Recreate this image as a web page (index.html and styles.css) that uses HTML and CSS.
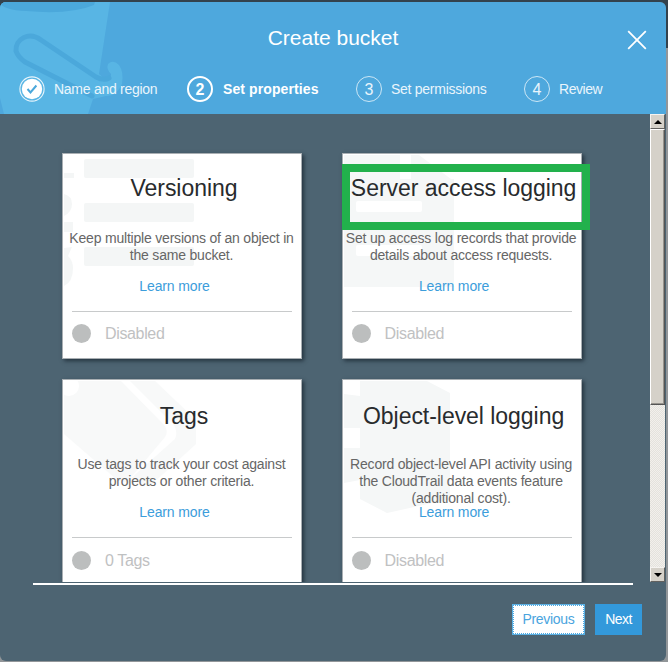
FILE: index.html
```html
<!DOCTYPE html>
<html lang="en">
<head>
<meta charset="utf-8">
<title>Create bucket</title>
<link rel="stylesheet" href="styles.css">
</head>
<body>
<main class="modal">
  <header class="header">
    <svg class="bucket" width="126" height="112" viewBox="0 0 126 112">
      <path fill="#58b5e4" d="M0 0H110L99 72L107 79Q111 78 111 72Q106 67 108 62Q113 57 119 63Q124 70 122 82Q116 95 106 94L93 97L88 112H4L0 96Z"/>
      <path fill="#4ba8db" d="M0 1Q4 8 26 9Q70 13 94 3L95 0H0Z"/>
      <path fill="none" stroke="#4ba8db" stroke-width="5" stroke-linecap="round" stroke-linejoin="round" d="M109 76Q104 79 96 75L41 38C29 29 15 37 16 49Q18 55 25 60L92 94"/>
    </svg>
    <div class="title-row"><h1>Create bucket</h1>
      <svg class="close" width="20" height="20" viewBox="0 0 20 20"><path d="M1.2 1.2L18.8 18.8M18.8 1.2L1.2 18.8" stroke="#fff" stroke-width="1.8"/></svg>
    </div>
    <nav class="steps">
      <div class="step s1"><svg width="26" height="26" viewBox="0 0 26 26"><circle cx="13" cy="13" r="12.1" fill="none" stroke="#e6f4fb" stroke-width="1.1"/><circle cx="13" cy="13" r="10.2" fill="#fff"/><path d="M8.5 13L11.5 16.4L17.4 9.5" fill="none" stroke="#4ba8db" stroke-width="2"/></svg><span class="label">Name and region</span></div>
      <div class="step s2 active"><i class="num">2</i><span class="label">Set properties</span></div>
      <div class="step s3"><i class="num">3</i><span class="label">Set permissions</span></div>
      <div class="step s4"><i class="num">4</i><span class="label">Review</span></div>
    </nav>
  </header>
  <section class="body">
    <div class="cards">
      <article class="card first-row">
        <svg class="art" width="238" height="204" viewBox="0 0 238 204" fill="#f4f6f6"><rect x="21" y="5" width="110" height="19" rx="2"/><rect x="21" y="49" width="110" height="19" rx="2"/><rect x="21" y="93" width="110" height="19" rx="2"/><path d="M1 19H11V24H1ZM1 40Q9 42 9 50Q9 58 1 62ZM1 68H10V78H1ZM1 94L9 93L5 102Q10 107 10 114Q10 128 1 132Z"/></svg>
        <h2>Versioning</h2>
        <p>Keep multiple versions of an object in<br>the same bucket.</p>
        <a>Learn more</a>
        <div class="status"><i class="dot"></i><span>Disabled</span></div>
      </article>
      <article class="card first-row">
        <svg class="art" width="238" height="204" viewBox="0 0 238 204"><path fill="#f5f7f7" d="M1 1H57V25H111V133H1Z"/><path fill="#f5f7f7" d="M68 1H76L108 25H68Z"/><g fill="#fff"><rect x="13" y="47" width="66" height="11" rx="2"/><rect x="13" y="91" width="66" height="11" rx="2"/></g></svg>
        <h2>Server access logging</h2>
        <p>Set up access log records that provide<br>details about access requests.</p>
        <a>Learn more</a>
        <div class="status"><i class="dot"></i><span>Disabled</span></div>
        <span class="highlight"></span>
      </article>
      <article class="card">
        <svg class="art" width="238" height="204" viewBox="0 0 238 204"><path fill="#f8f9f9" d="M1 1H58L101 45Q106 51 102 57L65 101Q60 104 53 99L1 54ZM67 1H92L133 40V64L88 105L65 101L112 59Q115 53 111 45Z"/><circle cx="6" cy="6" r="10" fill="#fff"/></svg>
        <h2>Tags</h2>
        <p>Use tags to track your cost against<br>projects or other criteria.</p>
        <a>Learn more</a>
        <div class="status"><i class="dot"></i><span>0 Tags</span></div>
      </article>
      <article class="card">
        <svg class="art" width="238" height="204" viewBox="0 0 238 204" fill="#f5f7f7"><path d="M17 1H84L107 13V119L44 133L17 119V100L1 103V68H17V48H1V14L17 16Z"/></svg>
        <h2>Object-level logging</h2>
        <p>Record object-level API activity using<br>the CloudTrail data events feature<br>(additional cost).</p>
        <a>Learn more</a>
        <div class="status"><i class="dot"></i><span>Disabled</span></div>
      </article>
    </div>
    <div class="scrollbar"><i class="sbtn"><svg width="8" height="4"><path d="M0 4L4 0L8 4Z"/></svg></i><i class="thumb"></i><i class="track"></i><i class="sbtn"><svg width="8" height="4"><path d="M0 0L4 4L8 0Z"/></svg></i></div>
  </section>
  <footer class="footer"><div class="rule"></div><div class="buttons"><button class="prev">Previous</button><button class="next">Next</button></div></footer>
</main>
</body>
</html>
```
FILE: styles.css
```css
* { box-sizing: border-box; }
body { margin: 0; height: 662px; overflow: hidden; padding-top: 2px; font: 14px/17px "Liberation Sans", Arial, sans-serif; background: linear-gradient(#33424d 0 48px, #929699 48px); }
h1, h2, p { margin: 0; font-weight: 400; }
i { font-style: normal; }
.modal { width: 666px; height: 659px; border-radius: 6px; overflow: hidden; background: #4d6472; display: flex; flex-direction: column; }
.header { position: relative; height: 112px; flex: none; background: #4ea8dd; color: #fff; }
.bucket { position: absolute; left: 0; top: 0; }
.title-row { position: relative; height: 72px; padding: 22px 0 0; text-align: center; }
h1 { font-size: 21px; line-height: 28px; }
.close { position: absolute; right: 19px; top: 28px; }
.steps { position: relative; display: flex; padding-left: 19px; height: 30px; align-items: center; }
.step { display: flex; align-items: center; color: #e9f5fc; letter-spacing: -0.27px; }
.s1 { width: 168px; }
.s2 { width: 169px; }
.s3 { width: 168px; }
.s4 { letter-spacing: -0.45px; }
.step .label { margin-left: 9px; line-height: 20px; }
.num { width: 26px; height: 26px; flex: none; border: 1px solid #cce7f6; border-radius: 50%; text-align: center; font-size: 16px; line-height: 25px; letter-spacing: 0; }
.active { color: #fff; font-weight: 700; letter-spacing: 0.1px; }
.step.active .label { margin-left: 10px; }
.active .num { border: 2px solid #fff; line-height: 23px; }
.body { height: 468px; flex: none; display: flex; justify-content: space-between; overflow: hidden; }
.cards { display: grid; grid-template-columns: 240px 240px; grid-template-rows: 206px 206px; column-gap: 39.6px; row-gap: 20px; padding: 39px 0 0 62px; }
.card { position: relative; display: flex; flex-direction: column; align-items: center; border: 1px solid #a9afb3; background: #fff; box-shadow: 2px 2px 4px #24343f; }
.art { position: absolute; left: 0; top: 0; }
.card h2, .card p, .card a, .status { position: relative; z-index: 2; }
.card h2 { height: 76px; padding: 22px 0 0 4px; font-size: 23px; line-height: 28px; letter-spacing: -0.04px; color: #282b2d; white-space: nowrap; }
.card.first-row h2 { padding-top: 20px; }
.card p { height: 48px; margin-left: -1px; text-align: center; color: #666; white-space: nowrap; letter-spacing: -0.2px; }
.card a { margin-right: 15px; color: #3c9ddb; letter-spacing: -0.12px; }
.status { display: flex; align-items: center; width: 220px; height: 46px; margin-top: 16px; border-top: 1px solid #c8cacb; color: #bfc1c2; font-size: 16px; letter-spacing: -0.35px; }
.first-row .status { height: 44px; }
.dot { width: 19px; height: 19px; margin-right: 14px; border-radius: 50%; background: #bcbebe; }
.highlight { position: absolute; z-index: 1; left: -0.6px; top: 10px; width: 248px; height: 66px; border: 8px solid #22b14c; }
.scrollbar { width: 15px; margin-right: 1px; display: flex; flex-direction: column; background: #eceae6; }
.sbtn { display: flex; align-items: center; justify-content: center; height: 15px; background: #d5d1c9; border: 1px solid; border-color: #f5f3f0 #62615f #62615f #f5f3f0; }
.thumb { height: 276px; background: #d5d1c9; border: 1px solid; border-color: #fff #555 #555 #fff; box-shadow: inset -1px -1px #96938d; }
.track { flex: 1; background: repeating-conic-gradient(#f2f0ec 0 25%, #e4e2dd 0 50%) 0 0 / 2px 2px; }
.footer { padding-left: 33px; }
.rule { height: 2px; width: 600px; background: #fff; margin-top: 1px; }
.buttons { display: flex; gap: 10px; padding: 19px 0 0 479px; }
button { height: 31px; padding: 0 0 2px; font: 14px "Liberation Sans", Arial, sans-serif; letter-spacing: -0.3px; }
.prev { width: 73px; border: 1px solid #5cb1e4; outline: 1px dotted #4ea8df; outline-offset: -2px; background: #fff; color: #4aa4de; }
.next { width: 47px; border: 0; background: #3399db; color: #fff; letter-spacing: -0.6px; }
```
